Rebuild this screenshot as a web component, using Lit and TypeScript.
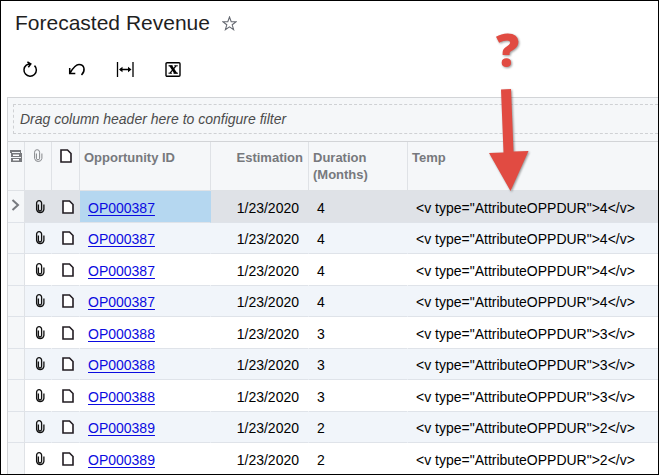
import { LitElement, html, css, svg } from "lit";
import { customElement, state } from "lit/decorators.js";
import { classMap } from "lit/directives/class-map.js";

interface Row {
  id: string;
  date: string;
  months: number;
}

const clip = svg`<path d="M3.400 4.500V9.200a1.500 1.500 0 0 0 3.200 0V3.200a2.300 2.300 0 0 0-5 0V9.400a3.700 3.700 0 0 0 7.300 0V4.500"/>`;

const clipIcon = (muted = false) => html`<svg class=${muted ? "clip muted" : "clip"} width="10" height="14" viewBox="0 0 10 14" aria-label="Files">${clip}</svg>`;

const noteIcon = () => html`<svg class="note" width="12" height="14" viewBox="0 0 12 14" aria-label="Notes">
  <path d="M1 1h6.500l3.500 3.500v8.500H1z"/></svg>`;

@customElement("app-root")
export class AppRoot extends LitElement {
  static styles = css`
    :host {
      display: flex;
      flex-direction: column;
      box-sizing: border-box;
      height: 100vh;
      overflow: hidden;
      position: relative;
      border: 1px solid #000;
      background: #fff;
      color: #000;
      font-family: "Liberation Sans", Arial, sans-serif;
      font-size: 14px;
    }
    svg { display: block; }
    button { border: 0; padding: 0; background: none; color: inherit; display: block; }
    .title { display: flex; align-items: center; gap: 12px; padding: 10px 14px 0; }
    h1 { margin: 0; font-size: 21px; line-height: 24px; font-weight: 400; color: #1f1f1f; }
    .tools { display: flex; gap: 30px; padding: 26px 21px 19px; }
    .grid { flex: 1; min-height: 0; overflow: hidden; margin-left: 6px; border-left: 1px solid #d2d4d7; border-top: 1px solid #d2d4d7; background: #f5f7f9; }
    .filter { display: flex; padding: 6px 0 7px 5px; }
    .drop { flex: 1; border: 1px dashed #cfd1d4; border-right: 0; padding: 0 6px; line-height: 28px; font-style: italic; color: #4c4c4c; }
    table { width: 100%; table-layout: fixed; border-spacing: 0; border-top: 1px solid #d2d4d7; background: #fff; }
    .c-mark { width: 17px; }
    .c-file { width: 27px; }
    .c-note { width: 28px; }
    .c-id { width: 131px; }
    .c-num { width: 98px; }
    .c-dur { width: 99px; }
    th { box-sizing: border-box; height: 49px; padding: 7px 4px 0; vertical-align: top; text-align: left; font-size: 13px; line-height: 17px; font-weight: 700; color: #77797d; background: #f5f7f9; border-right: 1px solid #dfe2e6; border-bottom: 1px solid #dfe2e6; }
    th:last-child, td:last-child { border-right: 0; }
    td { box-sizing: border-box; height: 32px; padding: 2px 9px 0 8px; white-space: nowrap; line-height: 16px; border-right: 1px solid transparent; border-bottom: 1px solid #dfe3e9; }
    tr:nth-child(even) td { height: 31px; background: #f1f5fa; }
    tr.active td { background: #dfe2e7; }
    tr.active td.id { background: #b5d7f0; }
    td.mark, tr.active td.mark, tr:nth-child(even) td.mark { padding: 0 2px; background: #f5f7f9; border-right-color: #dfe2e6; }
    th.icon { padding-left: 0; padding-right: 0; }
    th.icon svg { margin: 0 auto; }
    td.icon { padding: 0 0 0 10px; }
    .right { text-align: right; }
    th.right { padding-right: 5px; }
    a { color: #0b0be0; text-underline-offset: 2px; }
    .clip { fill: none; stroke: #111; stroke-width: 1.3; }
    .muted { stroke: #85878b; stroke-width: 1; }
    .note { fill: #fff; stroke: #221c22; stroke-width: 1.6; }
    .callout { position: absolute; left: 487px; top: 24px; width: 44px; color: #e14b42; pointer-events: none; filter: drop-shadow(1px 1px 1px #0006); }
    .question { font: 800 46px/48px "Open Sans", "DejaVu Sans", sans-serif; padding-left: 8px; height: 62px; }
  `;

  @state() private selected = 0;

  private rows: Row[] = [
    ...Array.from({ length: 4 }, () => ({ id: "OP000387", date: "1/23/2020", months: 4 })),
    ...Array.from({ length: 3 }, () => ({ id: "OP000388", date: "1/23/2020", months: 3 })),
    ...Array.from({ length: 2 }, () => ({ id: "OP000389", date: "1/23/2020", months: 2 })),
  ];

  private renderRow(r: Row, i: number) {
    const active = i === this.selected;
    return html`<tr class=${classMap({ active })} @click=${() => (this.selected = i)}>
      <td class="mark">${active
        ? html`<svg width="12" height="18" viewBox="0 0 12 18" fill="none" stroke="#777a7f" stroke-width="2"><path d="M2.500 2l5.500 5-5.500 5"/></svg>`
        : ""}</td>
      <td class="icon">${clipIcon()}</td>
      <td class="icon">${noteIcon()}</td>
      <td class="id"><a href="#${r.id}">${r.id}</a></td>
      <td class="right">${r.date}</td>
      <td>${r.months}</td>
      <td>${`<v type="AttributeOPPDUR">${r.months}</v>`}</td>
    </tr>`;
  }

  render() {
    return html`
      <header class="title">
        <h1>Forecasted Revenue</h1>
        <button aria-label="Add to favorites">
          <svg width="15" height="15" viewBox="0 0 15 15" fill="none" stroke="#666a72" stroke-width="1.1"><path d="M7.500 1l1.700 4.700 4.900.1-3.900 3 1.400 4.800-4.100-2.800-4.100 2.800 1.400-4.800-3.900-3 4.900-.1z"/></svg>
        </button>
      </header>
      <div class="tools" role="toolbar">
        <button aria-label="Refresh"><svg width="16" height="17" viewBox="0 0 16 17" fill="none" stroke="#000" stroke-width="1.500"><path d="M12.500 4.600A6.200 6.200 0 1 1 4.300 4.200Q6 3 8.500 3M5.400 .8L8.800 3L6.300 6.200"/></svg></button>
        <button aria-label="Undo"><svg width="18" height="17" viewBox="0 0 18 17" fill="none" stroke="#000" stroke-width="1.500"><path d="M2 12C5 7 7.500 3.500 11 3.500c5.500 0 6.800 6 2.500 10.500M1.700 7v5.500h5.600"/></svg></button>
        <button aria-label="Fit columns"><svg width="18" height="17" viewBox="0 0 18 17" fill="none" stroke="#000"><path d="M1.500 1v15M17 1v15" stroke-width="1.300"/><path d="M4 8.500h10" stroke-width="1.500"/><path d="M3 8.500l3.500-2.700v5.400zM15.500 8.500l-3.500-2.700v5.400z" fill="#000" stroke="none"/></svg></button>
        <button aria-label="Export to Excel"><svg width="18" height="17" viewBox="0 0 18 17"><rect x="2" y="1.700" width="14" height="13.600" rx="1" fill="none" stroke="#000" stroke-width="1.400"/><path d="M5 4.500h3.200l5.200 8h-3.200z"/><path d="M12 4.800L6 12.200" stroke="#000" stroke-width="1.200"/><path d="M4.500 4.800h4M10.300 4.800h3.500M4.500 12.200h3.500M9.500 12.200h4.500" stroke="#000"/></svg></button>
      </div>
      <main class="grid">
        <div class="filter"><div class="drop">Drag column header here to configure filter</div></div>
        <table>
          <colgroup><col class="c-mark"><col class="c-file"><col class="c-note"><col class="c-id"><col class="c-num"><col class="c-dur"><col></colgroup>
          <thead><tr>
            <th class="icon"><svg width="12" height="14" viewBox="0 0 12 14"><path d="M0 1h11v3h1v9H1V4H0z" fill="#77797d"/><path d="M2 3.500h8M1 8.500h10" stroke="#f5f7f9"/><path d="M3 5.500h6v1.500H3zM3 10h6v1.500H3z" fill="#fff"/></svg></th>
            <th class="icon">${clipIcon(true)}</th>
            <th class="icon">${noteIcon()}</th>
            <th>Opportunity ID</th>
            <th class="right">Estimation</th>
            <th>Duration (Months)</th>
            <th>Temp</th>
          </tr></thead>
          <tbody>${this.rows.map((r, i) => this.renderRow(r, i))}</tbody>
        </table>
      </main>
      <div class="callout">
        <div class="question">?</div>
        <svg width="44" height="106" viewBox="0 0 44 106"><path d="M13 2.500L23 2L25.500 64.500L40.500 64L22.500 104L1 66L15.500 65.500z" fill="currentColor"/></svg>
      </div>
    `;
  }
}
